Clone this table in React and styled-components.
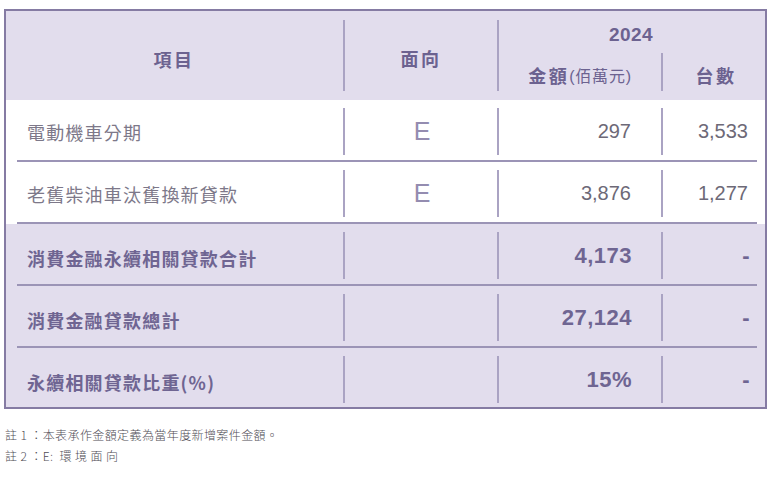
import React from "react";
import styled, { createGlobalStyle } from "styled-components";

const Global = createGlobalStyle`
  html, body { margin: 0; padding: 0; background: #ffffff; }
  body { font-family: "Noto Sans CJK TC", "Liberation Sans", sans-serif; }
`;

const Page = styled.div`
  padding: 9px 7px 0 4px;
`;

const Table = styled.div`
  width: 763px;
  box-sizing: border-box;
  border: 2px solid #857ba3;
  background: #ffffff;
`;

const cols = "326px 154px 164px 96px";

const Header = styled.div`
  background: #e2dded;
  padding: 9px 8px 9px 11px;
  display: grid;
  grid-template-columns: ${cols};
  grid-template-rows: 33px 38px;
`;

const HeadCell = styled.div`
  box-sizing: border-box;
  display: flex;
  align-items: center;
  justify-content: center;
  font-family: "Noto Sans CJK TC", sans-serif;
  font-weight: 700;
  font-size: 18px;
  letter-spacing: 2.5px;
  color: #6c6290;
  grid-column: ${(p) => p.$col};
  grid-row: ${(p) => p.$row};
  border-left: ${(p) => (p.$divider ? "2px solid #aaa3c3" : "none")};
  padding: ${(p) => p.$pad || "0"};
`;

const Year = styled.span`
  font-family: "Liberation Sans", Arial, sans-serif;
  font-weight: 700;
  font-size: 19px;
  letter-spacing: 0.4px;
`;

const Unit = styled.span`
  font-weight: 400;
  font-size: 16px;
  letter-spacing: 0.8px;
  font-family: "Liberation Sans", "Noto Sans CJK TC", sans-serif;
`;

const Section = styled.div`
  background: ${(p) => (p.$tinted ? "#e2dded" : "#ffffff")};
  padding: 0 8px 0 11px;
`;

const Row = styled.div`
  display: grid;
  grid-template-columns: ${cols};
  grid-template-rows: 47px;
  padding: 8px 0 ${(p) => (p.$last ? "4px" : "5px")};
  border-bottom: ${(p) => (p.$last ? "none" : "2px solid #9b94b6")};
`;

const Cell = styled.div`
  box-sizing: border-box;
  display: flex;
  align-items: center;
  justify-content: ${(p) => p.$justify || "flex-start"};
  border-left: ${(p) => (p.$divider ? "2px solid #aaa3c3" : "none")};
  padding: ${(p) => p.$pad || "0"};
`;

const Label = styled.span`
  font-family: "Noto Sans CJK TC", sans-serif;
  font-size: 18px;
  letter-spacing: 1.2px;
  font-weight: ${(p) => (p.$bold ? 700 : 400)};
  color: ${(p) => (p.$bold ? "#6f6592" : "#7d7889")};
  padding-top: ${(p) => (p.$bold ? "4px" : "0")};
`;

const Aspect = styled.span`
  font-family: "Liberation Sans", Arial, sans-serif;
  font-size: 25px;
  color: #948cb0;
`;

const Num = styled.span`
  font-family: "Liberation Sans", Arial, sans-serif;
  font-size: ${(p) => (p.$bold ? "22px" : "20px")};
  font-weight: ${(p) => (p.$bold ? 700 : 400)};
  letter-spacing: ${(p) => (p.$bold ? "0.5px" : "0")};
  color: ${(p) => (p.$bold ? "#6f6592" : "#6d6977")};
`;

const Notes = styled.div`
  margin-top: 15px;
  padding-left: 1px;
  font-family: "Noto Sans CJK TC", sans-serif;
  font-size: 12px;
  font-weight: 300;
  line-height: 21px;
  letter-spacing: 0.4px;
  color: #4f4d55;
  white-space: pre;
`;

const Wide = styled.span`
  letter-spacing: 3.5px;
`;

const dataRows = [
  { label: "電動機車分期", amount: "297", count: "3,533" },
  { label: "老舊柴油車汰舊換新貸款", amount: "3,876", count: "1,277" },
];

const totalRows = [
  { label: "消費金融永續相關貸款合計", amount: "4,173" },
  { label: "消費金融貸款總計", amount: "27,124" },
  { label: "永續相關貸款比重(%)", amount: "15%" },
];

export default function App() {
  return (
    <Page>
      <Global />
      <Table>
        <Header>
          <HeadCell $col="1" $row="1 / span 2" $pad="6px 12px 0 0">項目</HeadCell>
          <HeadCell $col="2" $row="1 / span 2" $divider $pad="4px 0 0 0">面向</HeadCell>
          <HeadCell $col="3 / span 2" $row="1" $divider $pad="0 0 4px 6px">
            <Year>2024</Year>
          </HeadCell>
          <HeadCell $col="3" $row="2" $divider $pad="6px 0 0 0">
            金額<Unit>(佰萬元)</Unit>
          </HeadCell>
          <HeadCell $col="4" $row="2" $divider $pad="6px 0 0 12px">台數</HeadCell>
        </Header>
        <Section>
          {dataRows.map((r) => (
            <Row key={r.label}>
              <Cell $pad="0 0 0 10px">
                <Label>{r.label}</Label>
              </Cell>
              <Cell $divider $justify="center" $pad="0 0 0 2px">
                <Aspect>E</Aspect>
              </Cell>
              <Cell $divider $justify="flex-end" $pad="0 30px 0 0">
                <Num>{r.amount}</Num>
              </Cell>
              <Cell $divider $justify="flex-end" $pad="0 9px 0 0">
                <Num>{r.count}</Num>
              </Cell>
            </Row>
          ))}
        </Section>
        <Section $tinted>
          {totalRows.map((r, i) => (
            <Row key={r.label} $last={i === totalRows.length - 1}>
              <Cell $pad="0 0 0 10px">
                <Label $bold>{r.label}</Label>
              </Cell>
              <Cell $divider />
              <Cell $divider $justify="flex-end" $pad="0 29px 0 0">
                <Num $bold>{r.amount}</Num>
              </Cell>
              <Cell $divider $justify="flex-end" $pad="0 7px 0 0">
                <Num $bold>-</Num>
              </Cell>
            </Row>
          ))}
        </Section>
      </Table>
      <Notes>
        <div>註 1 ：本表承作金額定義為當年度新增案件金額。</div>
        <div>註 2 ：E:  <Wide>環境面向</Wide></div>
      </Notes>
    </Page>
  );
}
